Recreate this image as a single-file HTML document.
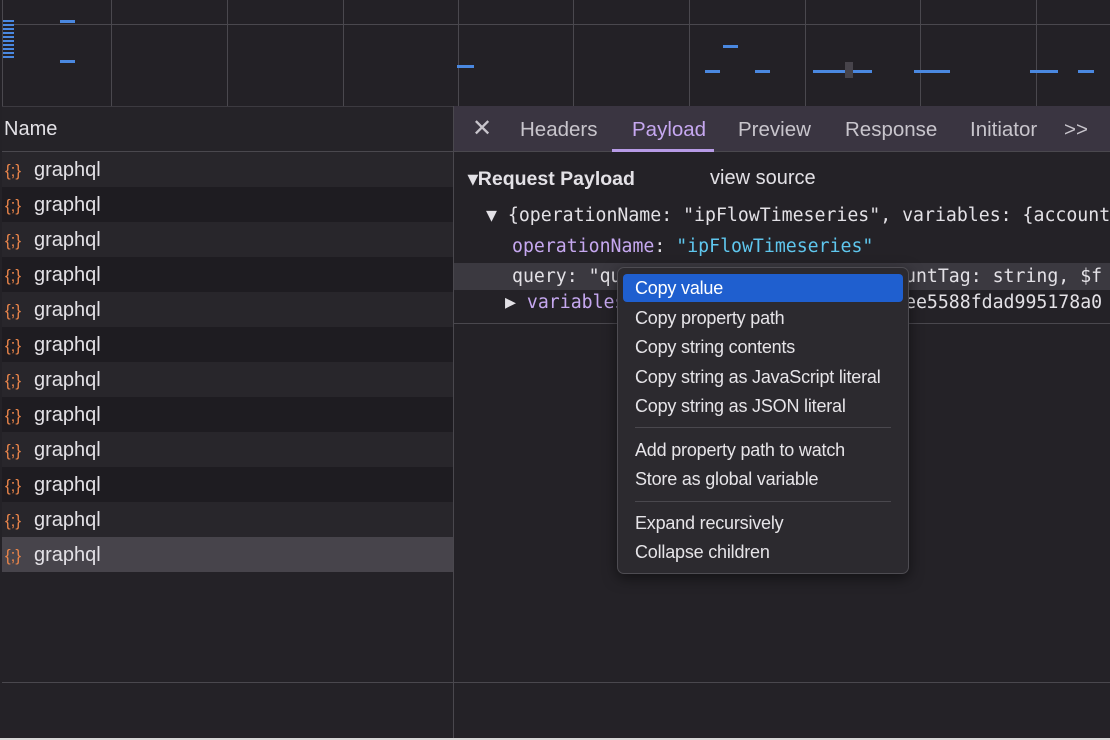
<!DOCTYPE html>
<html><head><style>
*{margin:0;padding:0;box-sizing:border-box}
body{width:1110px;height:740px;background:#242227;position:relative;overflow:hidden;font-family:"Liberation Sans",sans-serif;color:#e3e1e6}
.a{position:absolute}
.vl{position:absolute;top:0;height:106px;width:1px;background:#4a484e}
.bar{position:absolute;height:3px;background:#4a88e0}
.row{position:absolute;left:2px;width:451px;height:35px;font-size:20px;line-height:37px;padding-left:3px}
.row b{color:#e8844a;font-weight:normal;font-size:17px;margin-right:7px;letter-spacing:0px;display:inline-block;width:22px}
.mono{font-family:"DejaVu Sans Mono","Liberation Mono",monospace;font-size:18.2px;position:absolute;white-space:nowrap}
.tab{position:absolute;top:118px;font-size:20.5px;color:#c8c5cc}
.mi{position:absolute;left:635px;font-size:18px;color:#e6e4e8;letter-spacing:-0.2px}
.sep{position:absolute;left:635px;width:256px;height:1px;background:#4a484e}
</style></head><body>
<div class="a" style="left:0;top:0;width:1110px;height:106px;background:#232126"></div>
<div class="a" style="left:2px;top:24px;width:1108px;height:1px;background:#4a484e"></div>
<div class="vl" style="left:2px"></div><div class="vl" style="left:111px"></div><div class="vl" style="left:227px"></div><div class="vl" style="left:343px"></div><div class="vl" style="left:458px"></div><div class="vl" style="left:573px"></div><div class="vl" style="left:689px"></div><div class="vl" style="left:805px"></div><div class="vl" style="left:920px"></div><div class="vl" style="left:1036px"></div>
<div class="a" style="left:3px;top:20px;width:11px;height:38px;background:repeating-linear-gradient(#4a88e0 0 2px,transparent 2px 4px)"></div>
<div class="bar" style="left:60px;top:20px;width:15px"></div>
<div class="bar" style="left:60px;top:60px;width:15px"></div>
<div class="bar" style="left:457px;top:65px;width:17px"></div>
<div class="bar" style="left:723px;top:45px;width:15px"></div>
<div class="bar" style="left:705px;top:70px;width:15px"></div>
<div class="bar" style="left:755px;top:70px;width:15px"></div>
<div class="bar" style="left:813px;top:70px;width:59px"></div>
<div class="a" style="left:845px;top:62px;width:8px;height:16px;background:#47444b"></div>
<div class="bar" style="left:914px;top:70px;width:36px"></div>
<div class="bar" style="left:1030px;top:70px;width:28px"></div>
<div class="bar" style="left:1078px;top:70px;width:16px"></div>
<div class="a" style="left:2px;top:106px;width:451px;height:46px;background:#252328;border-top:1px solid #3c3a40;border-bottom:1px solid #4a484e"></div>
<div class="a" style="left:4px;top:118px;font-size:20px">Name</div>
<div class="a" style="left:453px;top:106px;width:657px;height:46px;background:#3a3541;border-bottom:1px solid #4a484e"></div>
<div class="a" style="left:472px;top:114px;font-size:24px;color:#c8c5cc">✕</div>
<div class="tab" style="left:520px">Headers</div>
<div class="tab" style="left:632px;color:#c6a8f0">Payload</div>
<div class="a" style="left:612px;top:149px;width:102px;height:3px;background:#b79be6"></div>
<div class="tab" style="left:738px">Preview</div>
<div class="tab" style="left:845px">Response</div>
<div class="tab" style="left:970px">Initiator</div>
<div class="tab" style="left:1064px">&gt;&gt;</div>
<div class="a" style="left:453px;top:106px;width:1px;height:634px;background:#4a484e"></div>
<div class="row" style="top:152px;background:#28262b"><b>{;}</b>graphql</div>
<div class="row" style="top:187px;background:#1e1c21"><b>{;}</b>graphql</div>
<div class="row" style="top:222px;background:#28262b"><b>{;}</b>graphql</div>
<div class="row" style="top:257px;background:#1e1c21"><b>{;}</b>graphql</div>
<div class="row" style="top:292px;background:#28262b"><b>{;}</b>graphql</div>
<div class="row" style="top:327px;background:#1e1c21"><b>{;}</b>graphql</div>
<div class="row" style="top:362px;background:#28262b"><b>{;}</b>graphql</div>
<div class="row" style="top:397px;background:#1e1c21"><b>{;}</b>graphql</div>
<div class="row" style="top:432px;background:#28262b"><b>{;}</b>graphql</div>
<div class="row" style="top:467px;background:#1e1c21"><b>{;}</b>graphql</div>
<div class="row" style="top:502px;background:#28262b"><b>{;}</b>graphql</div>
<div class="row" style="top:537px;background:#47444b"><b>{;}</b>graphql</div>
<div class="a" style="left:2px;top:682px;width:1108px;height:1px;background:#4a484e"></div>
<div class="a" style="left:0;top:738px;width:1110px;height:2px;background:#d8d8d8"></div>
<div class="a" style="left:468px;top:167px;font-size:19.5px;font-weight:bold">▾Request Payload</div>
<div class="a" style="left:710px;top:167px;font-size:20px">view source</div>
<div class="mono" style="left:486px;top:205px">▼ {operationName: "ipFlowTimeseries", variables: {account</div>
<div class="mono" style="left:512px;top:236px"><span style="color:#c6a8f0">operationName</span>: <span style="color:#5fc7ee">"ipFlowTimeseries"</span></div>
<div class="a" style="left:454px;top:263px;width:656px;height:27px;background:#3b3940"></div>
<div class="mono" style="left:512px;top:266px">query: "qu</div>
<div class="mono" style="left:905px;top:266px">untTag: string, $f</div>
<div class="mono" style="left:505px;top:292px">▶ <span style="color:#c6a8f0">variables</span></div>
<div class="mono" style="left:905px;top:292px">ee5588fdad995178a0</div>
<div class="a" style="left:454px;top:323px;width:656px;height:1px;background:#4a484e"></div>
<div class="a" style="left:617px;top:267px;width:292px;height:307px;background:#2c2a2f;border:1px solid #4e4c52;border-radius:7px;box-shadow:0 4px 14px rgba(0,0,0,.5)"></div>
<div class="a" style="left:623px;top:274px;width:280px;height:28px;background:#1f5fcf;border-radius:4px"></div>
<div class="mi" style="top:278px;color:#fff">Copy value</div>
<div class="mi" style="top:308px">Copy property path</div>
<div class="mi" style="top:337px">Copy string contents</div>
<div class="mi" style="top:367px">Copy string as JavaScript literal</div>
<div class="mi" style="top:396px">Copy string as JSON literal</div>
<div class="sep" style="top:427px"></div>
<div class="mi" style="top:440px">Add property path to watch</div>
<div class="mi" style="top:469px">Store as global variable</div>
<div class="sep" style="top:501px"></div>
<div class="mi" style="top:513px">Expand recursively</div>
<div class="mi" style="top:542px">Collapse children</div>
</body></html>
